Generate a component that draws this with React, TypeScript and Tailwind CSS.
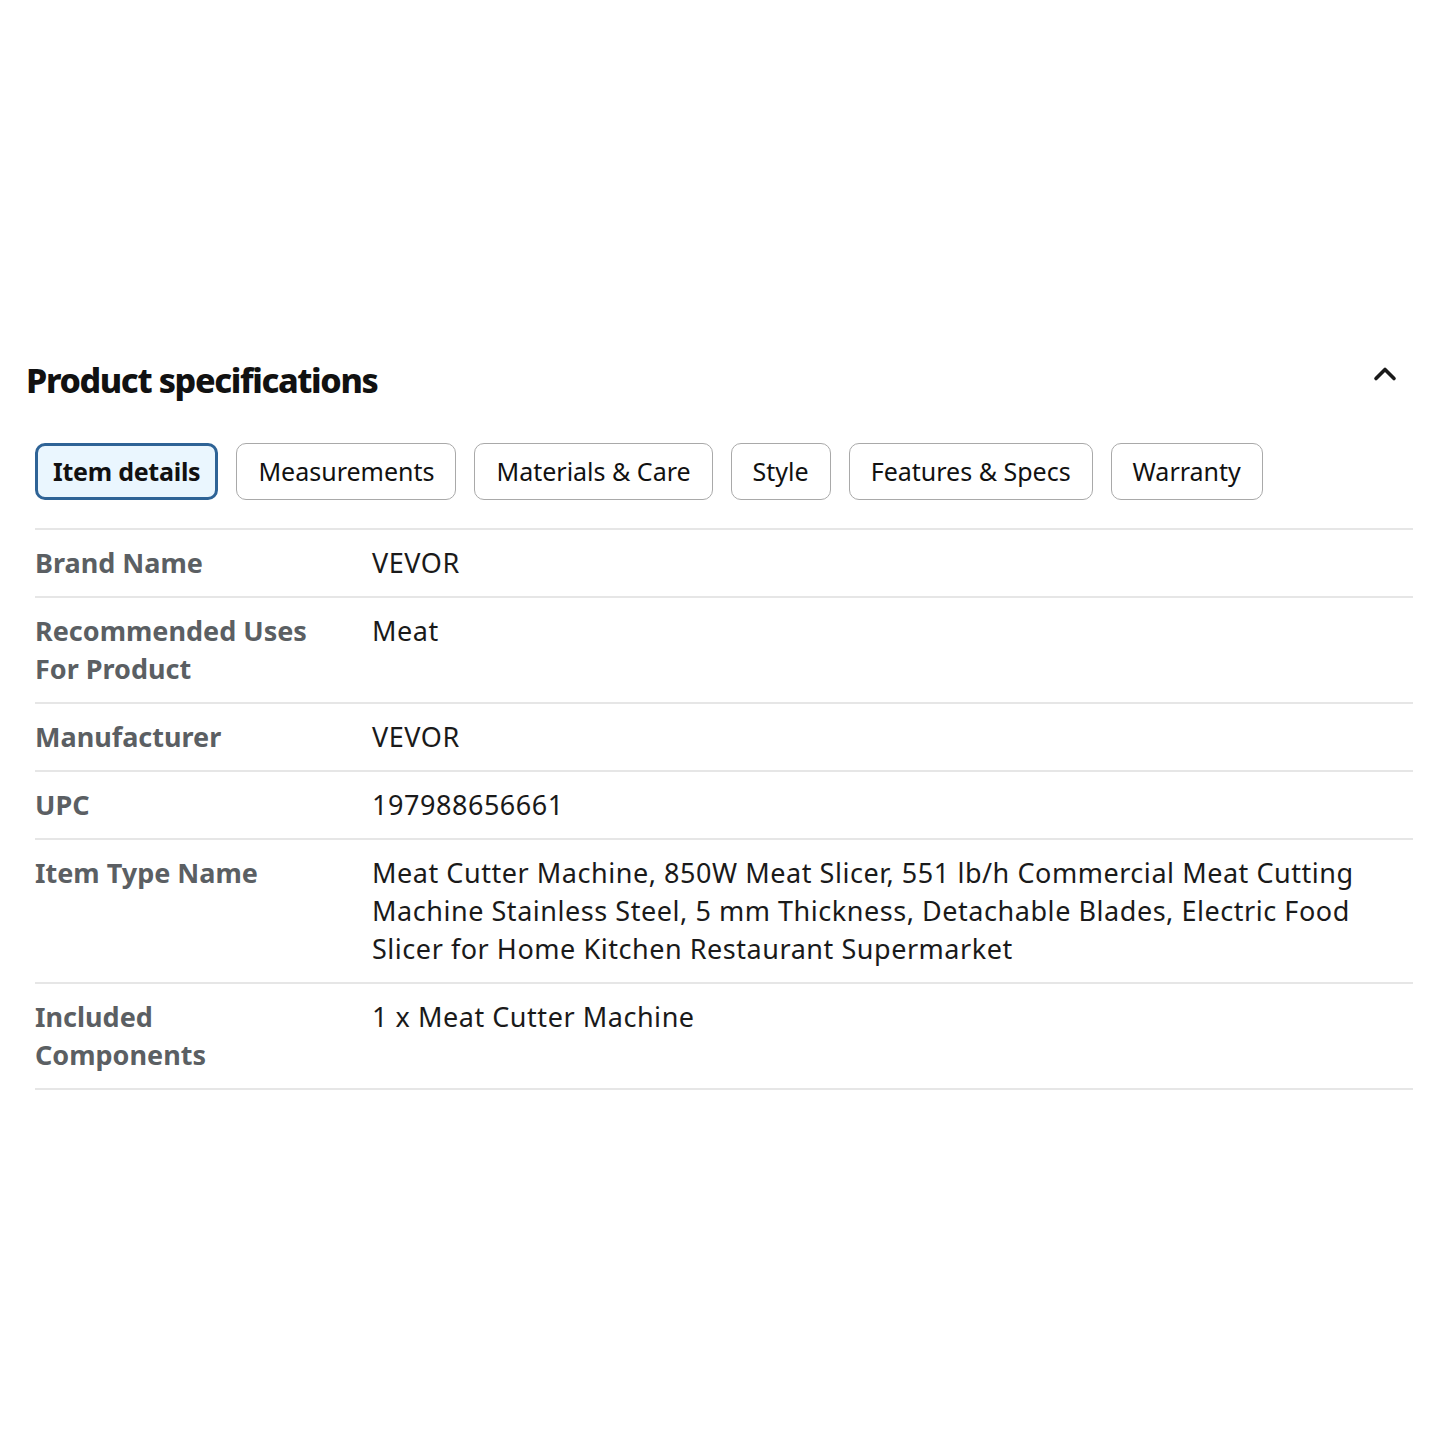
import { ChevronUp } from "lucide-react";

const tabs = ["Item details", "Measurements", "Materials & Care", "Style", "Features & Specs", "Warranty"];

const specs = [
  { label: "Brand Name", value: "VEVOR" },
  { label: "Recommended Uses For Product", value: "Meat" },
  { label: "Manufacturer", value: "VEVOR" },
  { label: "UPC", value: "197988656661" },
  {
    label: "Item Type Name",
    value:
      "Meat Cutter Machine, 850W Meat Slicer, 551 lb/h Commercial Meat Cutting Machine Stainless Steel, 5 mm Thickness, Detachable Blades, Electric Food Slicer for Home Kitchen Restaurant Supermarket",
  },
  { label: "Included Components", value: "1 x Meat Cutter Machine" },
];

export default function App() {
  return (
    <div className="w-[1440px] h-[1440px] bg-white font-['Noto_Sans',sans-serif] text-[#1a1a1a]">
      <section className="pt-[352px] pl-[26px] pr-[26px]">
        {/* header */}
        <div className="flex items-center justify-between h-[56px]">
          <h2 className="text-[34px] font-extrabold tracking-[-0.04em] text-[#111]">Product specifications</h2>
          <ChevronUp className="w-[36px] h-[36px] mr-[11px] -mt-[12px]" strokeWidth={2.4} />
        </div>

        {/* tabs */}
        <div className="flex gap-[18px] mt-[35px] pl-[9px]">
          {tabs.map((t, i) => (
            <button
              key={t}
              className={
                i === 0
                  ? "h-[57px] px-[15px] rounded-[10px] border-[3px] border-[#2e6396] bg-[#eaf6fe] text-[25px] font-bold tracking-[-0.01em] text-[#111]"
                  : "h-[57px] px-[21px] rounded-[10px] border border-[#a9a9a9] bg-white text-[25px] text-[#111]"
              }
            >
              {t}
            </button>
          ))}
        </div>

        {/* table */}
        <div className="mt-[28px] ml-[9px] mr-[1px] border-t-2 border-[#e6e6e6]">
          {specs.map((s) => (
            <div key={s.label} className="flex py-[14px] border-b-2 border-[#e6e6e6] text-[27px] leading-[38px] tracking-[0.02em]">
              <div className="w-[337px] shrink-0 pr-[50px] font-bold tracking-[0] text-[#5b5f63]">{s.label}</div>
              <div className="flex-1 pr-[20px] text-[#1a1a1a]">{s.value}</div>
            </div>
          ))}
        </div>
      </section>
    </div>
  );
}
